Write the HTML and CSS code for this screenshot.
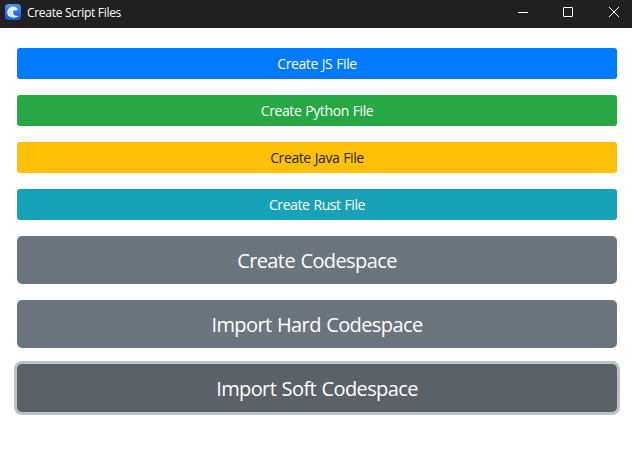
FILE: index.html
```html
<!DOCTYPE html>
<html lang="en">
<head>
<meta charset="utf-8">
<title>Create Script Files</title>
<link rel="stylesheet" href="styles.css">
</head>
<body>
<header class="titlebar">
  <svg class="logo" width="16" height="16" viewBox="0 0 16 16">
    <defs><linearGradient id="sky" x1="0" y1="0" x2="0" y2="1"><stop offset="0" stop-color="#4a91f8"/><stop offset="1" stop-color="#1558dc"/></linearGradient></defs>
    <rect width="16" height="16" rx="3.500" fill="url(#sky)"/>
    <path d="M12.800 5.500C11.800 3.300 9.500 2 7 2.600C3.800 3.500 2 6.500 2.300 9.300C2.600 12.200 5.500 13.800 8.500 13.700C10.800 13.700 12.800 13 13.800 12C11 12.400 8.200 11.200 8 8.800C7.900 7.200 8.700 6.200 10 5.800L10.500 7L11.300 5.700L12 6.700Z" fill="#eaf3ff"/>
    <path d="M4.300 7C4 10 5.500 12 8 12.700M6.200 5.500C5.600 7.500 6 9.500 7 10.800" fill="none" stroke="#a9cdfb" stroke-width=".8"/>
  </svg>
  <span class="title">Create Script Files</span>
  <svg class="controls" width="120" height="28" viewBox="0 0 120 28" fill="none" stroke="#fff">
    <path d="M6 12.500h10"/>
    <rect x="51.500" y="7.500" width="9" height="9" rx=".5"/>
    <path d="M97 7l10 10M107 7l-10 10"/>
  </svg>
</header>
<main class="actions">
  <button class="btn primary">Create JS File</button>
  <button class="btn success">Create Python File</button>
  <button class="btn warning">Create Java File</button>
  <button class="btn info">Create Rust File</button>
  <button class="btn large">Create Codespace</button>
  <button class="btn large">Import Hard Codespace</button>
  <button class="btn large focused">Import Soft Codespace</button>
</main>
</body>
</html>
```
FILE: styles.css
```css
* { box-sizing: border-box; }
body { margin: 0; height: 470px; overflow: hidden; background: #fff; font-family: "Open Sans", "Noto Sans", sans-serif; }
.titlebar { height: 28px; background: #202020; color: #fff; display: flex; align-items: center; padding-left: 5px; }
.logo { margin-bottom: 4px; }
.title { margin-left: 6px; font-size: 12px; line-height: 26px; height: 28px; letter-spacing: -0.3px; }
.controls { margin-left: auto; }
.actions { padding: 20px 15px 0 17px; display: flex; flex-direction: column; gap: 16px; }
.btn { height: 31px; border: 0; border-radius: 3px; padding: 0; color: #fff; font: 14px/31px "Open Sans", "Noto Sans", sans-serif; letter-spacing: -0.4px; word-spacing: 0.6px; }
.primary { background: #007bff; }
.success { background: #28a745; }
.warning { background: #ffc107; color: #212529; }
.info { background: #17a2b8; }
.large { height: 48px; border-radius: 5px; padding-top: 2px; background: #6c757d; font-size: 20px; line-height: 46px; letter-spacing: -0.6px; word-spacing: 0.8px; }
.focused { background: #5a6268; box-shadow: 0 0 0 3px #bdc1c6; }
```
